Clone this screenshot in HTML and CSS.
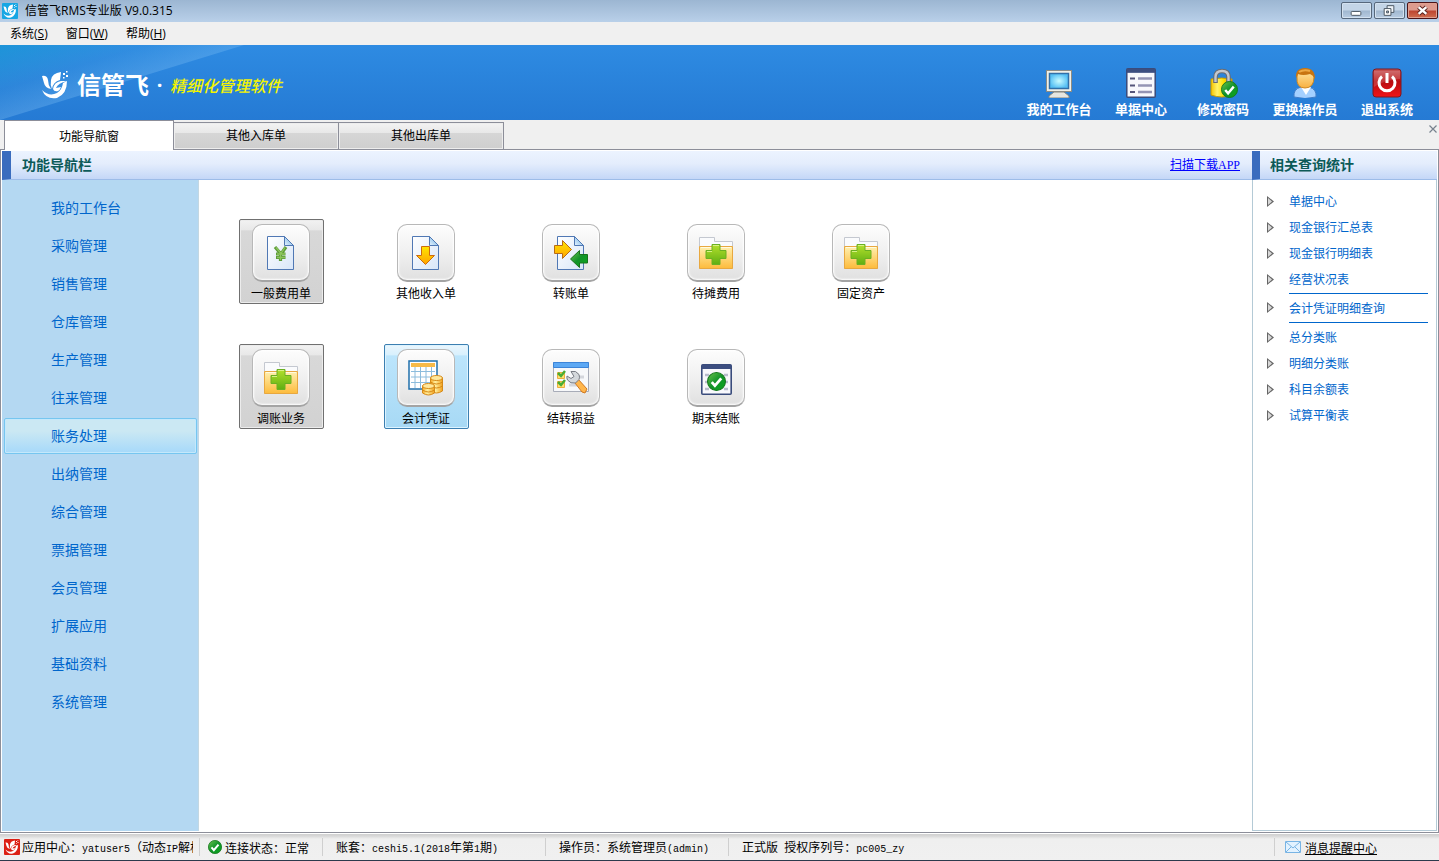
FILE: index.html
```html
<!DOCTYPE html>
<html lang="zh-CN">
<head>
<meta charset="utf-8">
<title>信管飞RMS专业版 V9.0.315</title>
<link rel="stylesheet" href="styles.css">
</head>
<body>
<svg class="defs" aria-hidden="true">
  <defs>
    <linearGradient id="g-page" x1="0" y1="0" x2="1" y2="1"><stop offset="0" stop-color="#fff"/><stop offset="1" stop-color="#d8e6f8"/></linearGradient>
    <linearGradient id="g-fold" x1="0" y1="1" x2="1" y2="0"><stop offset="0" stop-color="#e8f4ff"/><stop offset="1" stop-color="#5fa8e0"/></linearGradient>
    <linearGradient id="g-gold" x1="0" y1="0" x2="0" y2="1"><stop offset="0" stop-color="#ffe600"/><stop offset="1" stop-color="#ffa200"/></linearGradient>
    <linearGradient id="g-folder" x1="0" y1="0" x2="0" y2="1"><stop offset="0" stop-color="#fff0b0"/><stop offset="1" stop-color="#fdbb3c"/></linearGradient>
    <linearGradient id="g-plus" x1="0" y1="0" x2="0" y2="1"><stop offset="0" stop-color="#b4e02c"/><stop offset="1" stop-color="#5fae12"/></linearGradient>
    <linearGradient id="g-green" x1="0" y1="0" x2="1" y2="1"><stop offset="0" stop-color="#6cc44e"/><stop offset="0.5" stop-color="#12932a"/><stop offset="1" stop-color="#0aa81c"/></linearGradient>
    <linearGradient id="g-red" x1="0" y1="0" x2="0" y2="1"><stop offset="0" stop-color="#c85858"/><stop offset="0.45" stop-color="#b80c10"/><stop offset="1" stop-color="#f01418"/></linearGradient>
    <linearGradient id="g-lock" x1="0" y1="0" x2="1" y2="0"><stop offset="0" stop-color="#f4c400"/><stop offset="0.3" stop-color="#fff36a"/><stop offset="0.6" stop-color="#ffe000"/><stop offset="1" stop-color="#d89c00"/></linearGradient>
    <radialGradient id="g-screen"><stop offset="0" stop-color="#c8fbff"/><stop offset="1" stop-color="#55c0f4"/></radialGradient>
    <linearGradient id="g-coin" x1="0" y1="0" x2="1" y2="0"><stop offset="0" stop-color="#f5a823"/><stop offset="0.4" stop-color="#fff0a0"/><stop offset="1" stop-color="#f2a01c"/></linearGradient>
    <linearGradient id="g-face" x1="0" y1="0" x2="0" y2="1"><stop offset="0" stop-color="#ffe9a8"/><stop offset="1" stop-color="#f8b040"/></linearGradient>
    <symbol id="bird" viewBox="0 0 28 28">
      <path d="M1 5Q6 4 7 9Q7 14 10 18Q4 17 3 12Z"/>
      <path d="M20 1Q11 2 10 9Q9 14 11 18Q12 11 19 9Z"/>
      <path d="M26 10H20Q13 11 12 18Q13 21 17 20Q19 19 20 16L15 17Q17 12 26 10Z"/>
      <path d="M1 19Q8 26 16 22Q21 19 22 12L26 10Q26 23 16 27Q5 29 1 19Z"/>
      <path d="M22 2h2v2h-2zM25 0h1.500v1.500h-1.500zM25 4h2v2h-2zM22 6h1.500v1.500h-1.500z"/>
    </symbol>
    <symbol id="page" viewBox="0 0 34 34">
      <path d="M4.500 .5h17l9 9v24h-26z" transform="translate(-1 0)" fill="url(#g-page)" stroke="#5078b4"/>
      <path d="M20.500 .5v9h9z" fill="url(#g-fold)" stroke="#5078b4"/>
    </symbol>
    <symbol id="folder" viewBox="0 0 34 34">
      <path d="M.5 32.500V1.500h15v4h18v27z" fill="#fafbfd" stroke="#c4c8d0"/>
      <path d="M.5 10.500h33v22H.5z" fill="url(#g-folder)" stroke="#e8a840"/>
      <path d="M2 11.500h30" stroke="#fffbe0"/>
      <path d="M13 8.500h8v6h6v8h-6v6h-8v-6H7v-8h6z" fill="url(#g-plus)" stroke="#6ab023"/>
      <path d="M14 9.500h6M8 15.500h5" stroke="#d7f285"/>
    </symbol>
    <symbol id="check" viewBox="0 0 18 18">
      <circle cx="9" cy="9" r="8.500" fill="url(#g-green)" stroke="#15771c"/>
      <path d="M4.500 9.500l3 3.500 6-7" fill="none" stroke="#fff" stroke-width="2.600"/>
    </symbol>
    <symbol id="window" viewBox="0 0 31 31">
      <rect x=".8" y=".8" width="29.400" height="29.400" rx="1" fill="#f8f8fc" stroke="#3a4c7c" stroke-width="1.600"/>
      <path d="M1 1h29v4H1z" fill="#3c4e80"/>
    </symbol>
  </defs>
</svg>

<header class="titlebar">
  <svg class="app-icon" viewBox="0 0 16 16"><rect width="16" height="16" rx="1" fill="#16a6e4"/><use href="#bird" x="1" y="1" width="14" height="14" fill="#fff"/></svg>
  <span class="app-title">信管飞RMS专业版 V9.0.315</span>
  <div class="win-buttons">
    <button class="win-btn" aria-label="最小化"><svg viewBox="0 0 30 15"><rect x="9.500" y="8.500" width="10" height="4" rx="1" fill="#fff" stroke="#4a5560"/></svg></button>
    <button class="win-btn" aria-label="还原"><svg viewBox="0 0 30 15"><path d="M12.500 2.500h7v7h-7z" fill="#eef3f8" stroke="#4a5560"/><path d="M9.500 5.500h7v7h-7z" fill="#fff" stroke="#4a5560"/><path d="M12 8h2v2h-2z" fill="#aec0d2" stroke="#4a5560"/></svg></button>
    <button class="win-btn win-close" aria-label="关闭"><svg viewBox="0 0 30 15"><path d="M11 4l8 7M19 4l-8 7" stroke="#5c2420" stroke-width="4.500"/><path d="M11 4l8 7M19 4l-8 7" stroke="#fff" stroke-width="2.500"/></svg></button>
  </div>
</header>

<nav class="menubar">
  <button>系统(<u>S</u>)</button>
  <button>窗口(<u>W</u>)</button>
  <button>帮助(<u>H</u>)</button>
</nav>

<section class="banner">
  <div class="brand">
    <svg class="brand-mark" viewBox="0 0 28 28"><use href="#bird" fill="#fff"/></svg>
    <strong class="brand-name">信管飞</strong>
    <span class="brand-dot">·</span>
    <em class="slogan">精细化管理软件</em>
  </div>
  <div class="tools">
    <button class="tool">
      <svg viewBox="0 0 30 30"><path d="M10 24h10l5 4v2H5v-2z" fill="#e6e6e0" stroke="#85857c"/><rect x="2.500" y="2.500" width="25" height="21" fill="#f0f0e8" stroke="#8c8c84"/><rect x="5.500" y="5.500" width="19" height="15" fill="url(#g-screen)" stroke="#3170a8" stroke-width="1.500"/></svg>
      <span>我的工作台</span>
    </button>
    <button class="tool">
      <svg viewBox="0 0 30 30"><use href="#window"/><path d="M4 10.500h5M4 17.500h5M4 24h5" stroke="#55557a" stroke-width="2"/><path d="M12 10.500h14M12 17.500h14M12 24h14" stroke="#9494b4" stroke-width="2.500"/></svg>
      <span>单据中心</span>
    </button>
    <button class="tool">
      <svg viewBox="0 0 30 30"><path d="M3 11q11-2 21 0v16q-10 4-21 0z" fill="url(#g-lock)" stroke="#c89a00"/><path d="M7.500 15V9q0-6 6.500-6t6.500 6v6" fill="none" stroke="#686c74" stroke-width="4.600"/><path d="M7.500 14V9q0-6 6.500-6t6.500 6v5" fill="none" stroke="#c4c8ce" stroke-width="2.400"/><use href="#check" x="13" y="13" width="17" height="17"/></svg>
      <span>修改密码</span>
    </button>
    <button class="tool">
      <svg viewBox="0 0 30 30"><path d="M4 29q-1-8 7-10h8q8 2 7 10-11 3-22 0z" fill="#a4d0ff" stroke="#3f7cc8"/><path d="M11 19l5 8 5-8z" fill="#fff"/><path d="M7 9q0-8 8-8t9 8q0 11-9 11T7 9z" fill="url(#g-face)" stroke="#d08820"/><path d="M6 10Q5 0 15 0t10 11q-2-4-5-5-7 2-12 0z" fill="#c87410"/><path d="M9 4q5-3 11-1" fill="none" stroke="#eda945" stroke-width="2"/></svg>
      <span>更换操作员</span>
    </button>
    <button class="tool">
      <svg viewBox="0 0 30 30"><rect x="1" y="1" width="28" height="28" rx="3" fill="url(#g-red)" stroke="#7c1820"/><path d="M2 3h26v8Q15 11 2 19z" fill="#fff" opacity=".16"/><path d="M10 8.500a8 8 0 1 0 10 0M15 5v10" fill="none" stroke="#fff" stroke-width="3"/></svg>
      <span>退出系统</span>
    </button>
  </div>
</section>

<div class="tabs">
  <button class="tab tab-active">功能导航窗</button>
  <button class="tab">其他入库单</button>
  <button class="tab">其他出库单</button>
  <button class="tab-close" aria-label="关闭标签"><svg viewBox="0 0 8 8"><path d="M.5 .5l7 7M7.500 .5l-7 7" stroke="#76828e" stroke-width="1.200"/></svg></button>
</div>

<main class="workspace">
  <section class="nav-panel">
    <div class="panel-head">
      <h2>功能导航栏</h2>
      <a class="download" href="#app">扫描下载APP</a>
    </div>
    <div class="nav-body">
      <nav class="sidebar">
        <a href="#desk">我的工作台</a>
        <a href="#purchase">采购管理</a>
        <a href="#sales">销售管理</a>
        <a href="#stock">仓库管理</a>
        <a href="#production">生产管理</a>
        <a href="#dealing">往来管理</a>
        <a class="selected" href="#accounts">账务处理</a>
        <a href="#cashier">出纳管理</a>
        <a href="#general">综合管理</a>
        <a href="#bills">票据管理</a>
        <a href="#members">会员管理</a>
        <a href="#extend">扩展应用</a>
        <a href="#base">基础资料</a>
        <a href="#system">系统管理</a>
      </nav>
      <div class="tiles">
        <button class="tile tile-gray">
          <span class="tile-icon"><svg viewBox="0 0 34 34"><use href="#page"/><path d="M11 11l6 7 5-7M16.500 17v8M12 18h9.500M12 21.500h9.500" fill="none" stroke="#5c9c38" stroke-width="3.200"/><path d="M12 11.500l5 6 4-6M16.500 17v7M13 18h8M13 21.500h8" fill="none" stroke="#8cc45e" stroke-width="1.300"/></svg></span>
          <span>一般费用单</span>
        </button>
        <button class="tile">
          <span class="tile-icon"><svg viewBox="0 0 34 34"><use href="#page"/><path d="M12.500 10.500h8v9h5l-9 9-9-9h5z" fill="url(#g-gold)" stroke="#cc6a10"/></svg></span>
          <span>其他收入单</span>
        </button>
        <button class="tile">
          <span class="tile-icon"><svg viewBox="0 0 34 34"><use href="#page"/><path d="M.5 9.500h8v-5l9 9-9 9v-5h-8z" fill="url(#g-gold)" stroke="#b86a14"/><path d="M33.500 18.500h-8v-4l-9 8.500 9 8.500v-4.500h8z" fill="url(#g-green)" stroke="#18721c"/></svg></span>
          <span>转账单</span>
        </button>
        <button class="tile">
          <span class="tile-icon"><svg viewBox="0 0 34 34"><use href="#folder"/></svg></span>
          <span>待摊费用</span>
        </button>
        <button class="tile">
          <span class="tile-icon"><svg viewBox="0 0 34 34"><use href="#folder"/></svg></span>
          <span>固定资产</span>
        </button>
        <button class="tile tile-gray">
          <span class="tile-icon"><svg viewBox="0 0 34 34"><use href="#folder"/></svg></span>
          <span>调账业务</span>
        </button>
        <button class="tile tile-blue">
          <span class="tile-icon"><svg viewBox="0 0 36 36"><rect x="1" y="1" width="28" height="28" fill="#fff" stroke="#2070ac" stroke-width="1.500"/><path d="M3 3h24v4H3z" fill="#f8ba48"/><path d="M3 11.500h24M3 17h24M3 22.500h24M7 7v21M12.500 7v21M18 7v21M23.500 7v21" stroke="#8cbcdc"/><path d="M22.500 18v13q6 4 12 0V18z" fill="url(#g-coin)" stroke="#d68a18"/><ellipse cx="28.500" cy="18" rx="6" ry="2.500" fill="#ffe89c" stroke="#d68a18"/><path d="M22.500 22q6 4 12 0M22.500 26q6 4 12 0" fill="none" stroke="#d68a18"/><path d="M14.500 26v7q6 4 12 0v-7z" fill="url(#g-coin)" stroke="#d68a18"/><ellipse cx="20.500" cy="26" rx="6" ry="2.500" fill="#ffe89c" stroke="#d68a18"/><path d="M14.500 30q6 4 12 0" fill="none" stroke="#d68a18"/></svg></span>
          <span>会计凭证</span>
        </button>
        <button class="tile">
          <span class="tile-icon"><svg viewBox="0 0 36 36"><path d="M.5 2.500h35v29H.5z" fill="#f7f8fa" stroke="#a8acb8"/><path d="M.5 2.500h35v5H.5z" fill="#5ca8f4" stroke="#3c84d8"/><path d="M4.500 12.500h7v6h-7zM4.500 21.500h7v6h-7z" fill="#ffe070" stroke="#ecae3c"/><path d="M5 13l3 3 4-5M5 22l3 3 4-5" fill="none" stroke="#48ac34" stroke-width="2.500"/><path d="M25 17h6M16 25h8" stroke="#d4d6dc" stroke-width="3"/><path d="M22 23l3-4 9 10-2 4-3-1z" fill="#ffb64c" stroke="#d07820"/><path d="M18 11.500q5-1.500 8 3 1 3 0 5l-3.500 3.500q-5 1-8-3-1-2-.500-4l4 2.500 3-2z" fill="#d4d8dc" stroke="#787c84"/></svg></span>
          <span>结转损益</span>
        </button>
        <button class="tile">
          <span class="tile-icon"><svg viewBox="0 0 36 36"><use href="#window" x="3" y="4" width="31" height="31"/><path d="M7 15h4M26 15h4M7 22h4M26 22h4M7 29h4M26 29h4" stroke="#b8bccc" stroke-width="2.500"/><use href="#check" x="9" y="12" width="19" height="19"/></svg></span>
          <span>期末结账</span>
        </button>
      </div>
    </div>
  </section>
  <aside class="query-panel">
    <div class="panel-head">
      <h2>相关查询统计</h2>
    </div>
    <ul class="queries">
      <li><a href="#q1">单据中心</a></li>
      <li><a href="#q2">现金银行汇总表</a></li>
      <li><a href="#q3">现金银行明细表</a></li>
      <li><a href="#q4">经营状况表</a></li>
      <li class="ruled"><a href="#q5">会计凭证明细查询</a></li>
      <li><a href="#q6">总分类账</a></li>
      <li><a href="#q7">明细分类账</a></li>
      <li><a href="#q8">科目余额表</a></li>
      <li><a href="#q9">试算平衡表</a></li>
    </ul>
  </aside>
</main>

<footer class="statusbar">
  <div class="cell cell-center">
    <svg viewBox="0 0 16 16"><rect width="16" height="16" rx="1" fill="#dc2014"/><use href="#bird" x="1" y="1" width="14" height="14" fill="#fff"/></svg>
    <span class="clip">应用中心：<span class="mono">yatuser5</span>（动态<span class="mono">IP</span>解析）</span>
  </div>
  <div class="cell cell-link">
    <svg viewBox="0 0 16 16"><use href="#check" x="1" y="1" width="14" height="14"/></svg>
    <span>连接状态：正常</span>
  </div>
  <div class="cell cell-book"><span>账套：<span class="mono">ceshi5.1(2018</span>年第<span class="mono">1</span>期<span class="mono">)</span></span></div>
  <div class="cell cell-user"><span>操作员：系统管理员<span class="mono">(admin)</span></span></div>
  <div class="cell cell-serial"><span>正式版 &nbsp;授权序列号：<span class="mono">pc005_zy</span></span></div>
  <div class="cell cell-msg">
    <svg viewBox="0 0 16 16"><path d="M.5 2.500h15v11H.5z" fill="#e2f2ff" stroke="#78b4e4"/><path d="M1 3l7 6 7-6M1 13l5-5M15 13l-5-5" fill="none" stroke="#78b4e4"/></svg>
    <a href="#messages">消息提醒中心</a>
  </div>
</footer>
</body>
</html>
```
FILE: styles.css
```css
* { box-sizing: border-box; }

body {
  margin: 0;
  min-height: 100vh;
  display: flex;
  flex-direction: column;
  background: #f0f0f0;
  color: #000;
  font: 12px/16px "Open Sans", "Noto Sans CJK SC", sans-serif;
}

button {
  margin: 0;
  padding: 0;
  border: 0;
  background: none;
  color: inherit;
  font: inherit;
}

svg { display: block; }
.defs { position: absolute; width: 0; height: 0; }

/* Title bar and menu */
.titlebar {
  display: flex;
  align-items: center;
  height: 22px;
  padding: 0 1px 1px 2px;
  background: linear-gradient(#9cb6d2, #b9d0e9);
}
.app-icon { width: 16px; height: 16px; }
.app-title { flex: 1; padding-left: 7px; }
.win-buttons { display: flex; gap: 2px; }
.win-btn {
  width: 31px;
  height: 17px;
  border: 1px solid #57687c;
  border-radius: 2px;
  background: linear-gradient(#c4d5e7 48%, #a0b7cf 52%, #b8cce2);
  box-shadow: inset 0 0 0 1px #d4e2f0;
}
.win-btn svg { width: 29px; height: 15px; }
.win-close {
  border-color: #4c1418;
  background: linear-gradient(#dd9b8e 48%, #bd4430 52%, #cf6e50);
  box-shadow: inset 0 0 0 1px #e0a090;
}
.menubar {
  display: flex;
  gap: 18px;
  height: 23px;
  padding: 0 10px;
}
.menubar button { height: 23px; }

/* Banner */
.banner {
  display: flex;
  justify-content: space-between;
  height: 75px;
  padding-right: 11px;
  background:
    linear-gradient(163deg, rgba(10, 160, 205, .45), rgba(70, 160, 220, .15) 30%, rgba(140, 200, 250, .4) 60%) 0 0 / 244px 75px no-repeat,
    linear-gradient(#2e8be2, #257ad4);
  position: relative;
}
.banner::before {
  content: "";
  position: absolute;
  inset: 0 auto 0 0;
  width: 244px;
  background: linear-gradient(#2e8be2, #257ad4);
  clip-path: polygon(100% 0, 100% 100%, 0 100%);
}
.brand {
  position: relative;
  display: flex;
  align-items: center;
  padding: 4px 0 0 41px;
  color: #fff;
}
.brand-mark { width: 28px; height: 28px; }
.brand-name { padding-left: 8px; font-size: 24px; line-height: 32px; }
.brand-dot { width: 21px; text-align: center; font-size: 20px; font-weight: 700; }
.slogan { padding-top: 2px; color: #f4f400; font-size: 16px; line-height: 24px; font-weight: 500; }
.tools { display: flex; padding-top: 23px; }
.tool {
  width: 82px;
  display: flex;
  flex-direction: column;
  align-items: center;
  gap: 3px;
  color: #fff;
  font-size: 13px;
  font-weight: 700;
  white-space: nowrap;
}
.tool svg { width: 30px; height: 30px; }

/* Document tabs */
.tabs {
  display: flex;
  align-items: flex-end;
  height: 30px;
  padding: 0 2px 0 4px;
  border-bottom: 1px solid #8c8e99;
}
.tab {
  width: 166px;
  height: 27px;
  margin-right: -1px;
  border: 1px solid #8c8e99;
  border-bottom: 0;
  background: linear-gradient(#f3f3f3, #e8e8e8 38%, #d6d6d6 40%, #cecece);
  box-shadow: inset 0 0 0 1px #ededed;
}
.tab-active {
  position: relative;
  width: 170px;
  height: 30px;
  padding-top: 2px;
  margin-bottom: -1px;
  background: #fff;
  box-shadow: none;
}
.tab-close { margin: 0 0 16px auto; }
.tab-close svg { width: 8px; height: 8px; }

/* Workspace */
.workspace {
  flex: 1;
  display: flex;
  padding: 1px;
  border: 1px solid #8c8e99;
  border-top: 0;
  background: #fff;
}
.nav-panel { flex: 1; display: flex; flex-direction: column; }
.panel-head {
  display: flex;
  align-items: center;
  height: 29px;
  padding: 0 12px 0 11px;
  border-left: 9px solid #3a6cbe;
  border-bottom: 1px solid #9dbce8;
  background: linear-gradient(#ecf3ff, #e4edfc 45%, #c4d7f7);
}
.panel-head h2 {
  flex: 1;
  margin: 0;
  color: #0c5a58;
  font-size: 14px;
  line-height: 20px;
}
.download { color: #00f; font-family: "Liberation Serif", "Noto Sans CJK SC", serif; }
.nav-body { flex: 1; display: flex; }
.sidebar {
  width: 197px;
  padding: 10px 1px 9px 2px;
  border-right: 1px solid #c3d7e2;
  background: #b4d8f2;
}
.sidebar a {
  display: block;
  height: 36px;
  margin-bottom: 2px;
  padding-left: 46px;
  border: 1px solid transparent;
  border-radius: 2px;
  color: #0066cc;
  font-size: 14px;
  line-height: 34px;
  text-decoration: none;
}
.sidebar .selected {
  border-color: #76c6f0;
  background: linear-gradient(#cbe8f3 35%, #a6d9fa);
  box-shadow: inset 0 0 0 1px #c4e8fb;
}
.tiles {
  flex: 1;
  display: grid;
  grid-template-columns: repeat(5, 85px);
  grid-auto-rows: 85px;
  align-content: start;
  gap: 40px 60px;
  padding: 39px 40px;
}
.tile {
  display: flex;
  flex-direction: column;
  align-items: center;
  gap: 4px;
  padding: 4px 1px 0 0;
  border: 1px solid transparent;
  border-radius: 2px;
}
.tile-gray {
  border-color: #707070;
  background: linear-gradient(#f2f2f2, #e8e8e8 12%, #d8d8d8 13%, #d2d2d2);
  box-shadow: inset 0 0 0 1px #ececec;
}
.tile-blue {
  border-color: #3c7fb1;
  background: linear-gradient(#eaf6fd, #d8f0fd 12%, #bce5fc 13%, #a7d9f5);
  box-shadow: inset 0 0 0 1px #dcf3ff;
}
.tile-icon {
  display: grid;
  place-items: center;
  width: 58px;
  height: 58px;
  border: 1px solid #b8b8b8;
  border-bottom: 2px solid #a4a4a4;
  border-radius: 10px;
  background: linear-gradient(#fdfdfd, #f0f0f0 50%, #e0e0e0);
  box-shadow: inset 0 0 2px 1px #fff;
}
.tile-icon svg { width: 36px; height: 36px; }
.tile-icon svg[viewBox="0 0 34 34"] { width: 34px; height: 34px; }

/* Related queries */
.query-panel {
  width: 185px;
  display: flex;
  flex-direction: column;
}
.query-panel .panel-head { border-left-width: 8px; padding-left: 10px; }
.queries {
  flex: 1;
  margin: 0;
  padding: 9px 8px 0 14px;
  border: 1px solid #b4cad6;
  border-top: 0;
  list-style: none;
}
.queries li {
  position: relative;
  height: 26px;
  padding-left: 22px;
  line-height: 26px;
}
.queries li::before,
.queries li::after {
  content: "";
  position: absolute;
  left: 0;
  top: 7px;
  width: 7px;
  height: 11px;
  background: #666;
  clip-path: polygon(0 0, 100% 50%, 0 100%);
}
.queries li::after {
  left: 1px;
  top: 9px;
  width: 4px;
  height: 7px;
  background: #d8d8d8;
}
.queries a { display: block; color: #0066cc; text-decoration: none; }
.queries .ruled { height: 32px; }
.queries .ruled a {
  height: 30px;
  border: solid #0066cc;
  border-width: 1px 0;
  line-height: 30px;
}
.queries .ruled::before { top: 9px; }
.queries .ruled::after { top: 11px; }

/* Status bar */
.statusbar {
  display: flex;
  height: 28px;
  padding: 3px 0 2px;
  border-bottom: 1px solid #2c3a4c;
  background: linear-gradient(#fff 1px, #d0d0d0 1px, #d8d8d8 3px, #efefef 6px, #f0f0f0);
}
.cell {
  display: flex;
  align-items: center;
  margin: 2px 0;
  border-right: 1px solid #cfcfcf;
  white-space: nowrap;
}
.cell svg { flex: none; width: 16px; height: 16px; margin-right: 2px; }
.cell > span, .cell > a { padding-top: 3px; }
.mono { font-family: "Liberation Mono", monospace; font-size: 10px; }
.clip { overflow: hidden; }
.cell-center { width: 200px; padding: 0 6px 0 4px; }
.cell-link { width: 123px; padding-left: 7px; }
.cell-book { width: 223px; padding-left: 13px; }
.cell-user { width: 183px; padding-left: 13px; }
.cell-serial { flex: 1; padding-left: 13px; }
.cell-msg { width: 164px; padding-left: 10px; border-right: 0; }
.cell-msg svg { margin-right: 4px; }
.cell-msg a { color: #000; }
```
